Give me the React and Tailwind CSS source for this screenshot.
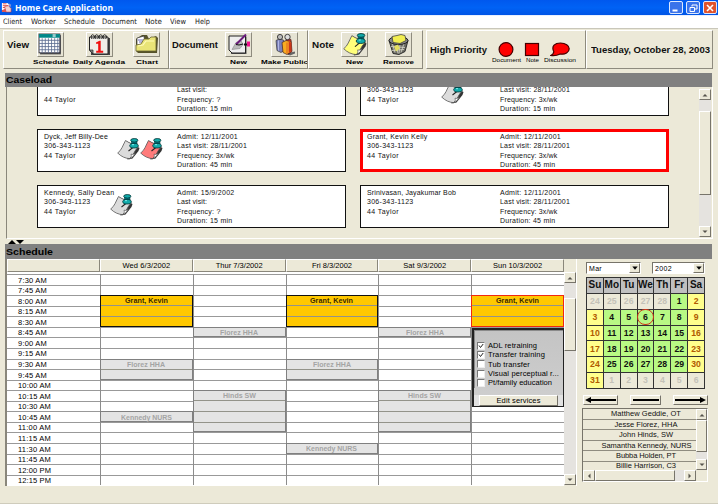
import { useLayoutEffect, useRef, useState } from "react";

// Text fitted to a given width, either by letter spacing or by horizontal stretch.
function Fit({ w, stretch = false, className = "", children }) {
  const ref = useRef(null);
  const [natural, setNatural] = useState(0);
  useLayoutEffect(() => {
    setNatural(ref.current.getBoundingClientRect().width);
  }, []);
  let style;
  if (natural) {
    style = stretch
      ? { transform: `scaleX(${w / natural})` }
      : { letterSpacing: `${(w - natural) / String(children).length}px` };
  }
  return (
    <span className={`flex shrink-0 whitespace-nowrap ${className}`} style={{ width: w }}>
      <span ref={ref} className="inline-block origin-left" style={style}>
        {children}
      </span>
    </span>
  );
}

const raised = "border border-t-white border-l-white border-r-[#77746a] border-b-[#77746a] bg-[#ece9d8]";

/* ---------- icons ---------- */

function ScheduleIcon() {
  return (
    <svg viewBox="1 1 24 22" className="h-full w-full">
      <rect x="3" y="3" width="20" height="18.500" fill="#555" />
      <rect x="2" y="2" width="20" height="18" fill="#fff" stroke="#223" strokeWidth=".8" />
      <rect x="2" y="2" width="20" height="3.500" fill="#088" />
      <path d="M15 2h3v3h-3z" fill="#9cc" />
      <path d="M2 8h20M2 11h20M2 14h20M2 17h20M5 6v14M8 6v14M11 6v14M14 6v14M17 6v14M20 6v14" stroke="#5c6c90" strokeWidth=".8" />
    </svg>
  );
}

function AgendaIcon() {
  return (
    <svg viewBox="1 0 25 23" className="h-full w-full">
      <path d="M5 5h19v17H5z" fill="#444" />
      <path d="M3.500 4H22v17H7l-3.500-4z" fill="#f0eee8" stroke="#222" strokeWidth="1" />
      <path d="M3.500 17H7v4z" fill="#888" stroke="#222" strokeWidth=".7" />
      {[6, 10, 14, 18].map((x) => (
        <path key={x} d={`M${x} 6c-2-3 0-5 1.500-4s1 3 0 4`} fill="none" stroke="#222" strokeWidth="1" />
      ))}
      <path d="M10 9.500l3.500-1.800h1.200v10h2.500v2h-7v-2h2v-7h-2.200z" fill="#f01010" />
    </svg>
  );
}

function ChartIcon() {
  return (
    <svg viewBox="0 1 25 23" className="h-full w-full">
      <path d="M4 21L2 19V7l6-4h5l2 4 7-3 2 2-1 15z" fill="#55522a" />
      <path d="M3 6l7-2 1 9-8 2z" fill="#fff" stroke="#333" strokeWidth=".7" />
      <path d="M4 8h5M5 10h4" stroke="#44a" strokeWidth=".8" />
      <path d="M2 13l5-1 3-5h5l2-2h5v14H2z" fill="#e9e477" stroke="#67622d" strokeWidth=".8" />
      <path d="M4 14l5-1 3-4h8" fill="none" stroke="#fffbb8" strokeWidth="1.200" />
    </svg>
  );
}

function NewDocIcon() {
  return (
    <svg viewBox="0 1 25 22" className="h-full w-full">
      <path d="M5 4h15.500v17.500H5z" fill="#555" />
      <path d="M3 3.500h16.500V20.500H6l-3-3z" fill="#eee" stroke="#222" strokeWidth="1" />
      <path d="M6 17l4-7 5-2 2 4-3 4z" fill="#bbb" stroke="#777" strokeWidth=".5" />
      <path d="M10 12L20 2" stroke="#6b1c7c" strokeWidth="2" />
      <path d="M10 12l3 .5 4-1" stroke="#111" strokeWidth="1" fill="none" />
      <path d="M21 9h3v5h-3z" fill="#f0108c" />
      <path d="M18 11h3v2h-3z" fill="#111" />
    </svg>
  );
}

function PeopleIcon() {
  return (
    <svg viewBox="0 1 25 22" className="h-full w-full">
      <path d="M14 21l9-2v2l-5 2z" fill="#666" />
      <path d="M4 8l4-2 4 2v10l-3 2-4-2z" fill="#7a80b8" stroke="#333" strokeWidth=".7" />
      <path d="M6.500 8v10" stroke="#b3b8e5" />
      <path d="M14 6l5 1 1 12-4 3z" fill="#d33020" stroke="#422" strokeWidth=".7" />
      <path d="M10 10l4-2 5 1v10l-4 3-4-2z" fill="#f8ac20" stroke="#422" strokeWidth=".7" />
      <path d="M15 10v11M17 9l2 1v9l-2 1z" fill="#c02818" stroke="#dc4a1e" strokeWidth=".8" />
      <circle cx="8" cy="4.500" r="2.600" fill="#bbb" stroke="#222" strokeWidth=".8" />
      <circle cx="15.500" cy="4.500" r="2.700" fill="#ddd" stroke="#222" strokeWidth=".8" />
    </svg>
  );
}

function PinnedNote({ color = "#dcdcdc" }) {
  return (
    <svg viewBox="0 0 23 22" className="h-full w-full">
      <path d="M9 3l13.500 7-1 3-6 7.500-5 1z" fill="#333" />
      <path d="M8.500 2.500C12 5 17 6.500 21.500 9c-4 2.500-4.500 8-8.500 11.700C8.500 20.500 4 18.500.700 15 4.500 12.500 6 7 8.500 2.500z" fill={color} stroke="#555" strokeWidth=".8" />
      <path d="M12.500 20.700c2-.7 2-3 1.500-4.500 2 .5 3.500 0 4.500-1.500-1 2.500-3 5-6 6z" fill="#fff" stroke="#444" strokeWidth=".6" />
      <path d="M16.500 9L11.500 13" stroke="#222" strokeWidth="1.100" />
      <path d="M14.500 3h5.500v4h-5.500z" fill="#078" stroke="#033" strokeWidth=".5" />
      <ellipse cx="17.300" cy="2.300" rx="3.600" ry="1.800" fill="#1aa" stroke="#033" strokeWidth=".8" />
      <ellipse cx="17" cy="7.700" rx="4.300" ry="2.300" fill="#1aa" stroke="#033" strokeWidth=".8" />
      <path d="M15 6.700h2" stroke="#8ee" />
    </svg>
  );
}

function NewNoteIcon() {
  return (
    <div className="h-[23px] w-[25px] pl-px">
      <PinnedNote color="#ffff7a" />
    </div>
  );
}

function TrashIcon() {
  return (
    <svg viewBox="1 1 25 22" className="h-full w-full">
      <path d="M4 8l4 13 6 1 6-3 3-11z" fill="#6c6c64" stroke="#222" strokeWidth=".9" />
      <path d="M7 10l3 10M11 12l2 9M15 12l-1 9M19 11l-3 9M6 14l14 1M7 18l12-1" stroke="#d8d8cc" strokeWidth=".8" />
      <ellipse cx="13.500" cy="8" rx="9.500" ry="4" fill="#888" stroke="#222" strokeWidth="1" />
      <path d="M7 4l5-1 4-1 4 1 1 5-6 3-7-1z" fill="#f2ee50" stroke="#444" strokeWidth=".8" />
      <path d="M9 14l4-2 2 4-4 3z" fill="#e4de60" />
    </svg>
  );
}

function AppLogo() {
  return (
    <svg viewBox="0 0 12 12" className="h-[11px] w-[11px]">
      <path d="M1 1h6l2 2v6H1z" fill="#fff" />
      <path d="M2 2h4M2 4h6M2 6h4" stroke="#d44" strokeWidth="1" />
      <path d="M4 5l4-1 3 3v4H5z" fill="#f4d0d0" stroke="#b33" strokeWidth=".6" />
      <path d="M1 9l4-2 1 4H1z" fill="#d55" />
      <path d="M8 1l3 2-1 3z" fill="#99c" />
    </svg>
  );
}

/* ---------- window chrome ---------- */

function TitleBar() {
  const btn = "flex h-[13px] w-[14px] items-center justify-center rounded-[2px] border border-[#dce8ff]";
  return (
    <div className="flex h-[15px] items-center bg-linear-to-b from-[#0058ee] via-[#0062f5] to-[#0055e6] pl-[1px]">
      <AppLogo />
      <Fit w={98} stretch className="ml-[3px] font-['Open_Sans'] text-[9.2px] leading-none font-bold text-white">
        Home Care Application
      </Fit>
      <div className="ml-auto flex gap-[3px] pr-px">
        <div className={`${btn} bg-[#3a73ea]`}>
          <svg viewBox="0 0 10 10" className="h-[10px] w-[10px]"><path d="M1.500 7.500h5" stroke="#fff" strokeWidth="2" /></svg>
        </div>
        <div className={`${btn} bg-[#3a73ea]`}>
          <svg viewBox="0 0 10 10" className="h-[10px] w-[10px]"><path d="M4 3.500V2h5v4H7M2 4.500h4.500v4H2z" fill="none" stroke="#fff" /></svg>
        </div>
        <div className={`${btn} bg-[#e0532c]`}>
          <svg viewBox="0 0 10 10" className="h-[10px] w-[10px]"><path d="M2 2l6 6M8 2L2 8" stroke="#fff" strokeWidth="1.600" /></svg>
        </div>
      </div>
    </div>
  );
}

const menus = [
  ["Client", 19, "ml-[3px]"],
  ["Worker", 25, "ml-[9px]"],
  ["Schedule", 31, "ml-[8px]"],
  ["Document", 35, "ml-[7px]"],
  ["Note", 17, "ml-[8px]"],
  ["View", 16, "ml-[8px]"],
  ["Help", 15, "ml-[9px]"],
];

function MenuBar() {
  return (
    <div className="flex h-[14px] items-center border-t border-b border-t-[#e8f0ff] border-b-[#c9c7ba] bg-white">
      {menus.map(([t, w, m]) => (
        <Fit key={t} w={w} stretch className={`${m} font-['DejaVu_Sans_Condensed','DejaVu_Sans'] text-[7.4px] leading-none text-[#222]`}>
          {t}
        </Fit>
      ))}
    </div>
  );
}

function Tool({ label, w, box, children }) {
  return (
    <div className={`flex shrink-0 flex-col items-center ${box}`}>
      <div className="h-[25px] w-[27px] shrink-0 border border-t-white border-l-white border-r-[#8e8b7e] border-b-[#8e8b7e] bg-[#e6e3d3]">{children}</div>
      <Fit w={w} stretch className="mt-[1px] text-[6.2px] leading-[8px] font-bold">{label}</Fit>
    </div>
  );
}

function Flag({ label, w, box, children }) {
  return (
    <div className={`flex shrink-0 flex-col items-center ${box}`}>
      <svg viewBox="0 0 20 15" className="h-[15px] w-[20px]">{children}</svg>
      <Fit w={w} stretch className="text-[6px] leading-[7px] text-black">{label}</Fit>
    </div>
  );
}

function Toolbar() {
  const group = "flex h-[39px] shrink-0 overflow-hidden border-t border-l border-r border-b border-t-white border-l-white border-r-[#8e8b7e] border-b-[#8e8b7e]";
  const title = "text-[8.7px] leading-[10px] font-bold text-[#111]";
  return (
    <div className="flex h-[44px] shrink-0 pt-px pl-[3px]">
      <div className={`${group} w-[166px] pt-px`}>
        <Fit w={22} stretch className={`${title} mt-[8px] ml-[3px]`}>View</Fit>
        <Tool label="Schedule" w={36} box="ml-[3px] w-[37px]"><ScheduleIcon /></Tool>
        <Tool label="Daily Agenda" w={52} box="ml-[3px] w-[54px]"><AgendaIcon /></Tool>
        <Tool label="Chart" w={22} box="ml-[7px] w-[27px]"><ChartIcon /></Tool>
      </div>
      <div className={`${group} w-[139px] pt-px`}>
        <Fit w={46} stretch className={`${title} mt-[8px] ml-[2px]`}>Document</Fit>
        <Tool label="New" w={17} box="ml-[7px] w-[27px]"><NewDocIcon /></Tool>
        <Tool label="Make Public" w={47} box="ml-[9px] w-[47px]"><PeopleIcon /></Tool>
      </div>
      <div className={`${group} w-[115px] pt-px`}>
        <Fit w={22} stretch className={`${title} mt-[8px] ml-[3px]`}>Note</Fit>
        <Tool label="New" w={17} box="ml-[7px] w-[27px]"><NewNoteIcon /></Tool>
        <Tool label="Remove" w={31} box="ml-[15px] w-[31px]"><TrashIcon /></Tool>
      </div>
      <div className={`${group} ml-[3px] w-[160px]`}>
        <Fit w={57} stretch className={`${title} mt-[14px] ml-[3px]`}>High Priority</Fit>
        <Flag label="Document" w={29} box="mt-[11px] ml-[4px] w-[30px]">
          <circle cx="10" cy="7.500" r="6.900" fill="red" stroke="#400" strokeWidth="1.200" />
        </Flag>
        <Flag label="Note" w={13} box="mt-[11px] ml-[1px] w-[20px]">
          <rect x="3.500" y="1.500" width="13" height="12" fill="red" stroke="#400" strokeWidth="1.200" />
        </Flag>
        <Flag label="Discussion" w={32} box="mt-[11px] ml-[1px] w-[33px]">
          <path d="M.800 13.500c2-1 3-2.500 3-4C1 4 5 1 10.500 1c5 0 8.700 2.500 8.700 5.700 0 3.500-4 6.300-9 5.300-3 1.500-6 2-9.400 1.500z" fill="red" stroke="#400" strokeWidth="1.200" />
        </Flag>
      </div>
      <div className={`${group} w-[127px]`}>
        <Fit w={119} stretch className={`${title} mt-[14px] ml-[4px]`}>Tuesday, October 28, 2003</Fit>
      </div>
    </div>
  );
}

function SectionBar({ children, w, className }) {
  return (
    <div className={`ml-[5px] flex w-[707px] shrink-0 items-center bg-[#808080] pl-px ${className}`}>
      <Fit w={w} stretch className="text-[9.5px] leading-none font-bold text-black">{children}</Fit>
    </div>
  );
}

function ArrowButton({ d, className }) {
  return (
    <div className={`flex shrink-0 items-center justify-center ${raised} ${className}`}>
      <svg viewBox="0 0 6 6" className="h-[6px] w-[6px]"><path d={d} fill="#55534a" /></svg>
    </div>
  );
}
const UP = "M0.500 4.500h5L3 2z";
const DOWN = "M0.500 1.500h5L3 4z";
const LEFT = "M4.500 0.500v5L2 3z";
const RIGHT = "M1.500 0.500v5L4 3z";

/* ---------- caseload ---------- */

const std = [["Admit: 12/11/2001", 61], ["Last visit: 28/11/2001", 70]];
const cases = [
  { name: ["", 10], phone: false, info: [["Admit:", 20], ["Last visit:", 30], ["Frequency: ?", 43.500], ["Duration: 15 min", 55.500]], notes: [] },
  { name: ["", 10], phone: true, info: [...std, ["Frequency: 3x/wk", 57.500], ["Duration: 15 min", 55.500]], notes: ["#dcdcdc"], noteBox: "left-[81px]" },
  { name: ["Dyck, Jeff Billy-Dee", 64], phone: true, info: [...std, ["Frequency: 3x/wk", 57.500], ["Duration: 45 min", 55.500]], notes: ["#dcdcdc", "#ff7b7b"], noteBox: "left-[80px]" },
  { name: ["Grant, Kevin Kelly", 60.500], phone: true, info: [...std, ["Frequency: 3x/wk", 57.500], ["Duration: 45 min", 55.500]], notes: [], selected: true },
  { name: ["Kennedy, Sally Dean", 70.500], phone: true, info: [["Admit: 15/9/2002", 57.500], ["Last visit:", 30], ["Frequency: ?", 43.500], ["Duration: 15 min", 55.500]], notes: ["#dcdcdc"], noteBox: "left-[73px]" },
  { name: ["Srinivasan, Jayakumar Bob", 89], phone: true, info: [...std, ["Frequency: 3x/wk", 57.500], ["Duration: 45 min", 55.500]], notes: [] },
];

function CaseCard({ c }) {
  return (
    <div
      className={`relative flex h-[43px] w-[309px] text-[7px] leading-[9.35px] text-[#111] ${
        c.selected ? "bg-white outline-[3px] -outline-offset-[3px] outline-[#ff0000]" : "bg-white outline-1 -outline-offset-1 outline-[#111]"
      }`}
    >
      <div className="ml-[7px] flex w-[133px] shrink-0 flex-col pt-[3px]">
        {c.name[0] ? <Fit w={c.name[1]}>{c.name[0]}</Fit> : <div className="h-[9.35px]" />}
        {c.phone ? <Fit w={46.5}>306-343-1123</Fit> : <div className="h-[9.35px]" />}
        <Fit w={32}>44 Taylor</Fit>
      </div>
      <div className="flex flex-col pt-[3px]">
        {c.info.map(([t, w]) => (
          <Fit key={t} w={w}>{t}</Fit>
        ))}
      </div>
      {c.notes.length > 0 && (
        <div className={`absolute top-[9px] flex ${c.noteBox}`}>
          {c.notes.map((n) => (
            <div key={n} className="h-[22px] w-[23px]"><PinnedNote color={n} /></div>
          ))}
        </div>
      )}
    </div>
  );
}

function Caseload() {
  return (
    <div className="ml-[6px] flex h-[152px] w-[707px] shrink-0 overflow-hidden border-b border-l border-b-white border-l-[#8a877b]">
      <div className="w-[692px] pl-[30px]">
        <div className="-mt-[14px] grid grid-cols-[309px_309px] gap-x-[14px] gap-y-[13px]">
          {cases.map((c, i) => (
            <CaseCard key={i} c={c} />
          ))}
        </div>
      </div>
      <div className="mt-[2px] flex h-[148px] w-[12px] shrink-0 flex-col bg-[#e5e3df]">
        <ArrowButton d={UP} className="h-[11px] w-full" />
        <div className={`mt-[11px] h-[84px] w-full ${raised}`} />
        <ArrowButton d={DOWN} className="mt-auto h-[11px] w-full" />
      </div>
      <div className="ml-px w-px bg-white" />
    </div>
  );
}

/* ---------- schedule ---------- */

const times = [
  "7:30 AM", "7:45 AM", "8:00 AM", "8:15 AM", "8:30 AM", "8:45 AM", "9:00 AM", "9:15 AM", "9:30 AM", "9:45 AM",
  "10:00 AM", "10:15 AM", "10:30 AM", "10:45 AM", "11:00 AM", "11:15 AM", "11:30 AM", "11:45 AM", "12:00 PM", "12:15 PM",
];

// Each event: label, width, number of quarter-hour rows, grid placement, style.
const events = [
  ["Grant, Kevin", 43, 3, "col-start-2 row-start-3 row-span-3", "grant"],
  ["Florez HHA", 38, 2, "col-start-2 row-start-9 row-span-2", "other"],
  ["Kennedy NURS", 51, 1, "col-start-2 row-start-14", "other"],
  ["Florez HHA", 38, 1, "col-start-3 row-start-6", "other"],
  ["Hinds SW", 33, 4, "col-start-3 row-start-12 row-span-4", "other"],
  ["Grant, Kevin", 43, 3, "col-start-4 row-start-3 row-span-3", "grant"],
  ["Florez HHA", 38, 2, "col-start-4 row-start-9 row-span-2", "other"],
  ["Kennedy NURS", 51, 1, "col-start-4 row-start-17", "other"],
  ["Florez HHA", 38, 1, "col-start-5 row-start-6", "other"],
  ["Hinds SW", 33, 4, "col-start-5 row-start-12 row-span-4", "other"],
  ["Grant, Kevin", 43, 3, "col-start-6 row-start-3 row-span-3", "active"],
];

const eventStyle = {
  grant: "bg-[#ffc800] text-[#3a2800] outline-[1.5px] outline-[#111] -outline-offset-1",
  active: "bg-[#ffc800] text-[#3a2800] outline-[1.5px] outline-[#f02810] -outline-offset-1",
  other: "bg-[#e4e4e4] text-[#a4a4a4] outline-1 outline-[#808080] -outline-offset-1",
};

function Event({ e: [label, w, rows, place, kind] }) {
  return (
    <div className={`flex flex-col ${place} ${eventStyle[kind]}`}>
      {Array.from({ length: rows }, (_, i) => (
        <div key={i} className={`flex flex-1 items-center justify-center ${i ? "border-t border-[#93938a]" : ""}`}>
          {i === 0 && <Fit w={w} stretch className="pt-px text-[7px] leading-none font-bold">{label}</Fit>}
        </div>
      ))}
    </div>
  );
}

const services = [
  ["ADL retraining", 49, true],
  ["Transfer training", 57, true],
  ["Tub transfer", 42, false],
  ["Visual perceptual r...", 71, false],
  ["Pt/family education", 64, false],
];

function ServicesPopup() {
  return (
    <div className="absolute top-[54px] left-[465px] flex h-[79px] w-[92px] flex-col border-2 border-r border-b border-[#222] bg-linear-to-b from-[#c4c4c4] to-[#cfcfcf]">
      <div className="flex flex-col border-t border-l border-[#8a8a8a] pt-[10px] pl-[2px]">
        {services.map(([t, w, on]) => (
          <div key={t} className="flex h-[9.35px] items-center">
            <div className="h-[8px] w-[8px] border border-t-[#777] border-r-[#eee] border-b-[#eee] border-l-[#777] bg-white">
              {on && <svg viewBox="0 0 6 6" className="h-[6px] w-[6px]"><path d="M1 2.500l1.500 2L5.200 1" fill="none" stroke="#222" strokeWidth="1" /></svg>}
            </div>
            <Fit w={w} className="ml-[3px] text-[7.5px] leading-none text-black">{t}</Fit>
          </div>
        ))}
      </div>
      <div className="mt-auto flex bg-[#e2e2e2] pl-[5px]">
        <div className={`flex h-[11px] w-[79px] items-center justify-center ${raised}`}>
          <Fit w={44} className="text-[7.5px] leading-none text-black">Edit services</Fit>
        </div>
      </div>
    </div>
  );
}

function ScheduleGrid() {
  const head = "flex items-center justify-center border-t border-l border-r border-b border-t-white border-l-white border-r-[#8a877b] border-b-[#8a877b] bg-[#ece9d8]";
  const days = [["Wed 6/3/2002", 48], ["Thur 7/3/2002", 47], ["Fri 8/3/2002", 40], ["Sat 9/3/2002", 43], ["Sun 10/3/2002", 49]];
  return (
    <div className="ml-[5px] flex h-[227px] w-[572px] shrink-0 border-r border-l-2 border-r-white border-l-[#8a877b]">
      <div className="w-[557px] shrink-0 bg-white">
        <div className="grid h-[13px] grid-cols-[93px_repeat(5,92.8px)]">
          <div className={head} />
          {days.map(([d, w]) => (
            <div key={d} className={head}><Fit w={w} className="text-[7.5px] leading-none text-black">{d}</Fit></div>
          ))}
        </div>
        <div className="relative mt-[2px] grid h-[212px] grid-cols-[93px_repeat(5,92.8px)] grid-rows-[repeat(20,10.57px)] overflow-hidden">
          {times.map((t, i) => (
            <div key={t} style={{ gridRow: i + 1 }} className="col-span-full col-start-1 flex items-center border-t border-[#999] pl-[11px]">
              <Fit w={t.length > 7 ? 33 : 29} className="pt-px text-[7.5px] leading-none text-black">{t}</Fit>
            </div>
          ))}
          {["col-start-2", "col-start-3", "col-start-4", "col-start-5", "col-start-6"].map((c) => (
            <div key={c} className={`${c} row-start-1 row-end-21 border-l border-[#8c8c8c]`} />
          ))}
          {events.map((e, i) => (
            <Event key={i} e={e} />
          ))}
          <ServicesPopup />
        </div>
      </div>
      <div className="mt-[13px] flex h-[213px] w-[12px] shrink-0 flex-col bg-[#e5e3df]">
        <ArrowButton d={UP} className="h-[11px]" />
        <div className={`mt-[15px] h-[53px] ${raised}`} />
        <ArrowButton d={DOWN} className="mt-auto h-[11px]" />
      </div>
    </div>
  );
}

/* ---------- calendar column ---------- */

function Select({ label, w, className }) {
  return (
    <div className={`flex h-[12px] items-center border border-t-[#77746a] border-r-white border-b-white border-l-[#77746a] bg-white pl-[2px] ${className}`}>
      <Fit w={w} className="text-[7px] leading-none text-black">{label}</Fit>
      <div className={`ml-auto flex h-[10px] w-[11px] items-center justify-center ${raised}`}>
        <svg viewBox="0 0 6 6" className="h-[6px] w-[6px]"><path d="M.300 1.500h5.400L3 4.700z" /></svg>
      </div>
    </div>
  );
}

const weeks = [
  [24, 25, 26, 27, 28, 1, 2],
  [3, 4, 5, 6, 7, 8, 9],
  [10, 11, 12, 13, 14, 15, 16],
  [17, 18, 19, 20, 21, 22, 23],
  [24, 25, 26, 27, 28, 29, 30],
  [31, 1, 2, 3, 4, 5, 6],
];

function Calendar() {
  const cell = "flex items-center justify-center border-r border-b border-[#333]";
  return (
    <div className="grid h-[112px] w-[119px] grid-cols-7 grid-rows-7 border-t border-l border-[#333] text-[8.7px] leading-none font-bold">
      {["Su", "Mo", "Tu", "We", "Th", "Fr", "Sa"].map((d) => (
        <div key={d} className={`${cell} bg-[#c0c0c0] text-[10px] text-[#111]`}>{d}</div>
      ))}
      {weeks.flatMap((w, r) =>
        w.map((n, c) => {
          const outside = (r === 0 && c < 5) || (r === 5 && c > 0);
          const weekend = c === 0 || c === 6;
          const tone = outside ? "bg-[#ece9d8] text-[#c4c2b8]" : weekend ? "bg-[#ffff8c] text-[#b05a00]" : "bg-[#b8f984] text-[#111]";
          const today = r === 1 && c === 3;
          return (
            <div key={`${r}-${c}`} className={`${cell} relative ${tone}`}>
              {n}
              {today && <div className="absolute -inset-x-[1px] -inset-y-[0.5px] rounded-full border border-[#d03818]" />}
            </div>
          );
        })
      )}
    </div>
  );
}

function NavButton({ w, d, vw }) {
  return (
    <div className={`flex h-[10px] items-center justify-center ${raised}`} style={{ width: w }}>
      <svg viewBox={`0 0 ${vw} 8`} width={vw} height="8"><path d={d} /></svg>
    </div>
  );
}

const staff = [
  ["Matthew Geddie, OT", 70],
  ["Jesse Florez, HHA", 63],
  ["John Hinds, SW", 54],
  ["Samantha Kennedy, NURS", 90],
  ["Bubba Holden, PT", 60],
  ["Billie Harrison, C3", 60],
];

function StaffList() {
  return (
    <div className="flex h-[74px] w-[126px] border border-t-[#77746a] border-r-white border-b-white border-l-[#77746a]">
      <div className="flex w-[113px] shrink-0 flex-col">
        <div className="h-[62px] overflow-hidden">
          {staff.map(([t, w], i) => (
            <div key={t} className={`flex items-center justify-center border-b border-[#8f8c80] ${i === 3 ? "pl-[14px]" : "pl-[13px]"} ${i === 5 ? "h-[9px]" : "h-[10.6px]"}`}>
              <Fit w={w} className="text-[7.5px] leading-none text-[#111]">{t}</Fit>
            </div>
          ))}
        </div>
        <div className="flex h-[11px] shrink-0 bg-[#e5e3df]">
          <ArrowButton d={LEFT} className="h-[11px] w-[12px]" />
          <div className={`h-[11px] w-[80px] ${raised}`} />
          <ArrowButton d={RIGHT} className="ml-auto h-[11px] w-[12px]" />
        </div>
      </div>
      <div className="flex h-[61px] w-[11px] flex-col bg-[#e5e3df]">
        <ArrowButton d={UP} className="h-[11px]" />
        <div className={`h-[32px] ${raised}`} />
        <ArrowButton d={DOWN} className="mt-auto h-[11px]" />
      </div>
    </div>
  );
}

function SidePanel() {
  return (
    <div className="flex h-[227px] w-[134px] shrink-0 flex-col pl-[5px]">
      <div className="mt-[3px] ml-[4px] flex gap-[11px]">
        <Select label="Mar" w={13} className="w-[55px]" />
        <Select label="2002" w={17} className="w-[53px]" />
      </div>
      <div className="mt-[3px] ml-[4px]"><Calendar /></div>
      <div className="mt-[6px] ml-px flex gap-[12px]">
        <NavButton w={35} vw={31} d="M0 4l6-3v2h25v2H6v2z" />
        <NavButton w={31} vw={26} d="M0 3h26v2H0z" />
        <NavButton w={35} vw={31} d="M31 4l-6-3v2H0v2h25v2z" />
      </div>
      <div className="mt-[3px]"><StaffList /></div>
    </div>
  );
}

export default function App() {
  return (
    <div className="flex h-[504px] w-[718px] flex-col overflow-hidden bg-[#ece9d8] font-['Liberation_Sans',Arial,sans-serif] text-black">
      <TitleBar />
      <MenuBar />
      <Toolbar />
      <SectionBar w={46} className="h-[14px]">Caseload</SectionBar>
      <Caseload />
      <div className="flex h-[5px] shrink-0 items-end pl-[8px]">
        <svg viewBox="0 0 17 4" className="h-[4px] w-[17px]"><path d="M0 4h8L4 0zM8 0h8l-4 4z" /></svg>
      </div>
      <SectionBar w={47} className="h-[15px]">Schedule</SectionBar>
      <div className="flex shrink-0">
        <ScheduleGrid />
        <SidePanel />
      </div>
      <div className="mt-auto h-px bg-[#cfccbc]" />
    </div>
  );
}
